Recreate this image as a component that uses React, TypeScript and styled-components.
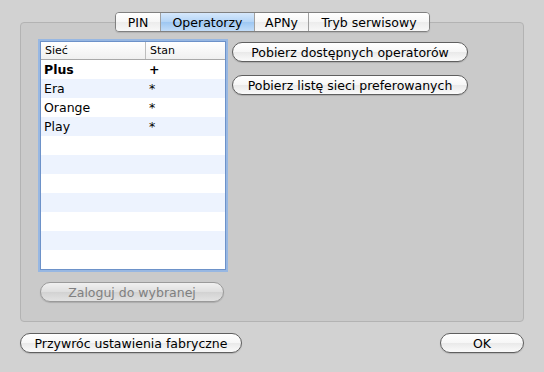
import React from "react";
import styled, { createGlobalStyle } from "styled-components";

const Global = createGlobalStyle`
  html, body { margin: 0; padding: 0; background: #d2d2d2; }
  body { font-family: "DejaVu Sans", "Liberation Sans", sans-serif; color: #000; }
  * { box-sizing: border-box; }
`;

const Window = styled.div`
  width: 544px;
  height: 372px;
  background: #d2d2d2;
  padding: 12px 20px 0 20px;
  display: flex;
  flex-direction: column;
`;

const Tabs = styled.div`
  align-self: center;
  display: flex;
  height: 20px;
  border: 1px solid #808080;
  border-radius: 4px;
  overflow: hidden;
  position: relative;
  z-index: 1;
  box-shadow: 0 1px 1px rgba(0, 0, 0, 0.12);
  margin-left: 1px;
`;

const Tab = styled.div<{ $w: number; $active?: boolean }>`
  width: ${(p) => p.$w}px;
  display: flex;
  align-items: center;
  justify-content: center;
  font-size: 12.5px;
  border-left: 1px solid #a0a0a0;
  &:first-child { border-left: none; }
  background: ${(p) =>
    p.$active
      ? "linear-gradient(#d6e8fc, #b3d4f6 50%, #9dc7f2 51%, #c2ddf9)"
      : "linear-gradient(#ffffff, #f6f6f6 50%, #ececec 51%, #f8f8f8)"};
`;

const Panel = styled.div`
  margin-top: -10px;
  height: 300px;
  border: 1px solid #b3b3b3;
  border-radius: 4px;
  background: #cacaca;
  padding: 17px 0 0 18px;
  display: flex;
  gap: 5px;
`;

const LeftCol = styled.div`
  width: 188px;
  display: flex;
  flex-direction: column;
  gap: 12px;
  padding-left: 1px;
`;

const Table = styled.div`
  width: 186px;
  border: 1px solid #6d92c9;
  box-shadow: 0 0 0 2px #97b7e2;
  background: #fff;
  margin-top: 1px;
`;

const HeaderRow = styled.div`
  display: grid;
  grid-template-columns: 104px 1fr;
  height: 18px;
  border-bottom: 1px solid #a9a9a9;
  background: linear-gradient(#ffffff, #f0f0f0);
  font-size: 11px;
`;

const HeaderCell = styled.div`
  display: flex;
  align-items: center;
  padding-left: 4px;
  & + & { border-left: 1px solid #bdbdbd; }
`;

const Row = styled.div<{ $alt: boolean }>`
  display: grid;
  grid-template-columns: 105px 1fr;
  height: 19px;
  background: ${(p) => (p.$alt ? "#edf3fe" : "#ffffff")};
  font-size: 12.5px;
`;

const Cell = styled.div<{ $bold?: boolean }>`
  display: flex;
  align-items: center;
  padding-left: 3px;
  font-weight: ${(p) => (p.$bold ? 700 : 400)};
`;

const Button = styled.button<{ $w: number; $disabled?: boolean }>`
  width: ${(p) => p.$w}px;
  height: 20px;
  border-radius: 10px;
  border: 1px solid ${(p) => (p.$disabled ? "#9a9a9a" : "#5f5f5f")};
  background: ${(p) =>
    p.$disabled
      ? "linear-gradient(#f0f0f0, #dedede 50%, #d2d2d2 51%, #e2e2e2)"
      : "linear-gradient(#ffffff, #f6f6f6 50%, #e9e9e9 51%, #fafafa)"};
  color: ${(p) => (p.$disabled ? "#808080" : "#000")};
  font-family: "DejaVu Sans", "Liberation Sans", sans-serif;
  font-size: 12.5px;
  padding: 0;
  display: flex;
  align-items: center;
  justify-content: center;
  box-shadow: 0 1px 1px rgba(0, 0, 0, 0.15);
`;

const RightCol = styled.div`
  display: flex;
  flex-direction: column;
  gap: 13px;
  padding-top: 2px;
`;

const BottomBar = styled.div`
  margin-top: 11px;
  display: flex;
  justify-content: space-between;
`;

const networks = [
  { name: "Plus", state: "+", bold: true },
  { name: "Era", state: "*" },
  { name: "Orange", state: "*" },
  { name: "Play", state: "*" },
];

export default function App() {
  const rows = Array.from({ length: 11 }, (_, i) => networks[i] ?? null);
  return (
    <>
      <Global />
      <Window>
        <Tabs>
          <Tab $w={44}>PIN</Tab>
          <Tab $w={94} $active>Operatorzy</Tab>
          <Tab $w={54}>APNy</Tab>
          <Tab $w={121}>Tryb serwisowy</Tab>
        </Tabs>
        <Panel>
          <LeftCol>
            <Table>
              <HeaderRow>
                <HeaderCell>Sieć</HeaderCell>
                <HeaderCell>Stan</HeaderCell>
              </HeaderRow>
              {rows.map((r, i) => (
                <Row key={i} $alt={i % 2 === 1}>
                  <Cell $bold={r?.bold}>{r?.name ?? ""}</Cell>
                  <Cell $bold={r?.bold}>{r?.state ?? ""}</Cell>
                </Row>
              ))}
            </Table>
            <Button $w={184} $disabled>Zaloguj do wybranej</Button>
          </LeftCol>
          <RightCol>
            <Button $w={236}>Pobierz dostępnych operatorów</Button>
            <Button $w={236}>Pobierz listę sieci preferowanych</Button>
          </RightCol>
        </Panel>
        <BottomBar>
          <Button $w={222}>Przywróc ustawienia fabryczne</Button>
          <Button $w={84}>OK</Button>
        </BottomBar>
      </Window>
    </>
  );
}
